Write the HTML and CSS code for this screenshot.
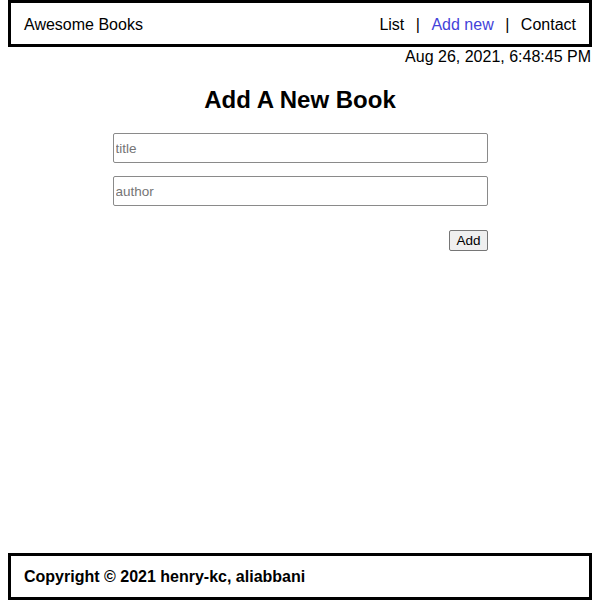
FILE: index.html
```html
<!DOCTYPE html>
<html lang="en">
<head>
<meta charset="utf-8">
<title>Awesome Books</title>
<link rel="stylesheet" href="styles.css">
</head>
<body>
<header class="top-bar">
  <span class="brand">Awesome Books</span>
  <nav class="nav">
    <a class="nav-link">List</a>
    <span class="sep">|</span>
    <a class="nav-link active">Add new</a>
    <span class="sep">|</span>
    <a class="nav-link">Contact</a>
  </nav>
</header>
<div class="date">Aug 26, 2021, 6:48:45 PM</div>
<main class="main">
  <h2 class="heading">Add A New Book</h2>
  <form class="book-form">
    <input class="field" type="text" placeholder="title">
    <input class="field" type="text" placeholder="author">
    <div class="actions"><button class="add-btn" type="button">Add</button></div>
  </form>
</main>
<footer class="footer">Copyright © 2021 henry-kc, aliabbani</footer>
</body>
</html>
```
FILE: styles.css
```css
html, body { height: 100%; }
body {
  margin: 0 8px;
  font-family: "Liberation Sans", Arial, sans-serif;
  font-size: 16px;
  color: #000;
  display: flex;
  flex-direction: column;
  box-sizing: border-box;
}
.top-bar {
  border: 3px solid #000;
  height: 47px;
  box-sizing: border-box;
  padding: 2px 13px 0 13px;
  display: flex;
  align-items: center;
  justify-content: space-between;
}
.nav { display: flex; gap: 11.5px; align-items: center; }
.nav-link { color: #000; text-decoration: none; }
.nav-link.active { color: #4343d9; }
.date { text-align: right; line-height: 20px; padding-right: 1px; }
.main { display: flex; flex-direction: column; align-items: center; }
.heading {
  font-size: 24px;
  font-weight: bold;
  margin: 19px 0 19px;
  line-height: 28px;
}
.book-form {
  width: 375px;
  display: flex;
  flex-direction: column;
  gap: 13px;
}
.field {
  height: 30px;
  box-sizing: border-box;
  border: 1px solid #8a8a8a;
  border-radius: 2px;
  padding: 0 2px;
  font-family: "Liberation Sans", Arial, sans-serif;
  font-size: 13.5px;
}
.field::placeholder { color: #757575; }
.actions { display: flex; justify-content: flex-end; margin-top: 11px; }
.add-btn {
  font-family: "Liberation Sans", Arial, sans-serif;
  font-size: 13.5px;
  height: 21px;
  padding: 0 6px;
  border: 1px solid #767676;
  border-radius: 2px;
  background: #efefef;
  color: #000;
}
.footer {
  margin-top: auto;
  border: 3px solid #000;
  height: 47px;
  box-sizing: border-box;
  padding: 0 13px;
  display: flex;
  align-items: center;
  font-weight: bold;
}
```
